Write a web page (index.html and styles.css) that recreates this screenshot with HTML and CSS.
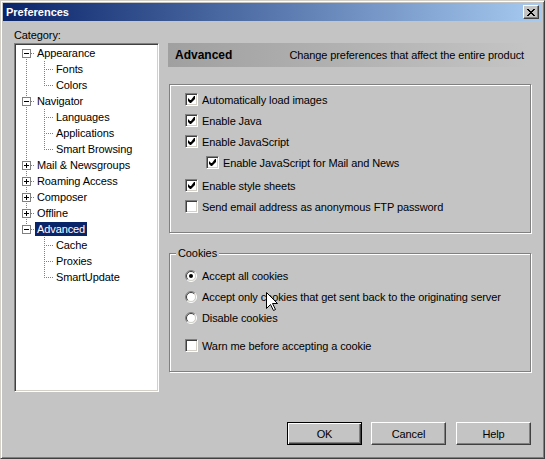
FILE: index.html
```html
<!DOCTYPE html>
<html>
<head>
<meta charset="utf-8">
<title>Preferences</title>
<link rel="stylesheet" href="styles.css">
</head>
<body>
<div class="window">
  <div class="titlebar">
    <span class="title">Preferences</span>
    <span class="close"><svg width="8" height="7" viewBox="0 0 8 7"><path fill="#000" d="M0 0h2v1H0z M6 0h2v1H6z M1 1h2v1H1z M5 1h2v1H5z M2 2h4v1H2z M3 3h2v1H3z M2 4h4v1H2z M1 5h2v1H1z M5 5h2v1H5z M0 6h2v1H0z M6 6h2v1H6z"/></svg></span>
  </div>
  <div class="content">
    <div class="cat-label">Category:</div>
    <div></div>
    <div class="tree">
      <div class="row"><span class="g r-first"><svg class="box" width="9" height="9"><rect x="0.5" y="0.5" width="8" height="8" fill="#fff" stroke="#808080"/><path d="M2 4h5v1H2z" fill="#000"/></svg></span><span class="lbl">Appearance</span></div>
      <div class="row"><span class="g pass"></span><span class="g c-mid"></span><span class="lbl">Fonts</span></div>
      <div class="row"><span class="g pass"></span><span class="g c-last"></span><span class="lbl">Colors</span></div>
      <div class="row"><span class="g r-mid"><svg class="box" width="9" height="9"><rect x="0.5" y="0.5" width="8" height="8" fill="#fff" stroke="#808080"/><path d="M2 4h5v1H2z" fill="#000"/></svg></span><span class="lbl">Navigator</span></div>
      <div class="row"><span class="g pass"></span><span class="g c-mid"></span><span class="lbl">Languages</span></div>
      <div class="row"><span class="g pass"></span><span class="g c-mid"></span><span class="lbl">Applications</span></div>
      <div class="row"><span class="g pass"></span><span class="g c-last"></span><span class="lbl">Smart Browsing</span></div>
      <div class="row"><span class="g r-mid"><svg class="box" width="9" height="9"><rect x="0.5" y="0.5" width="8" height="8" fill="#fff" stroke="#808080"/><path d="M2 4h5v1H2z M4 2h1v5H4z" fill="#000"/></svg></span><span class="lbl">Mail &amp; Newsgroups</span></div>
      <div class="row"><span class="g r-mid"><svg class="box" width="9" height="9"><rect x="0.5" y="0.5" width="8" height="8" fill="#fff" stroke="#808080"/><path d="M2 4h5v1H2z M4 2h1v5H4z" fill="#000"/></svg></span><span class="lbl">Roaming Access</span></div>
      <div class="row"><span class="g r-mid"><svg class="box" width="9" height="9"><rect x="0.5" y="0.5" width="8" height="8" fill="#fff" stroke="#808080"/><path d="M2 4h5v1H2z M4 2h1v5H4z" fill="#000"/></svg></span><span class="lbl">Composer</span></div>
      <div class="row"><span class="g r-mid"><svg class="box" width="9" height="9"><rect x="0.5" y="0.5" width="8" height="8" fill="#fff" stroke="#808080"/><path d="M2 4h5v1H2z M4 2h1v5H4z" fill="#000"/></svg></span><span class="lbl">Offline</span></div>
      <div class="row"><span class="g r-last"><svg class="box" width="9" height="9"><rect x="0.5" y="0.5" width="8" height="8" fill="#fff" stroke="#808080"/><path d="M2 4h5v1H2z" fill="#000"/></svg></span><span class="lbl sel">Advanced</span></div>
      <div class="row"><span class="g"></span><span class="g c-mid"></span><span class="lbl">Cache</span></div>
      <div class="row"><span class="g"></span><span class="g c-mid"></span><span class="lbl">Proxies</span></div>
      <div class="row"><span class="g"></span><span class="g c-last"></span><span class="lbl">SmartUpdate</span></div>
    </div>
    <div class="panel">
      <div class="header"><span class="h-title">Advanced</span><span class="h-desc">Change preferences that affect the entire product</span></div>
      <div class="group">
        <div class="opt"><span class="cb"><svg width="7" height="7" viewBox="0 0 7 7"><path fill="#000" d="M6 0h1v3L3 7H2L0 5V2l2 2h1z"/></svg></span>Automatically load images</div>
        <div class="opt"><span class="cb"><svg width="7" height="7" viewBox="0 0 7 7"><path fill="#000" d="M6 0h1v3L3 7H2L0 5V2l2 2h1z"/></svg></span>Enable Java</div>
        <div class="opt"><span class="cb"><svg width="7" height="7" viewBox="0 0 7 7"><path fill="#000" d="M6 0h1v3L3 7H2L0 5V2l2 2h1z"/></svg></span>Enable JavaScript</div>
        <div class="opt sub"><span class="cb"><svg width="7" height="7" viewBox="0 0 7 7"><path fill="#000" d="M6 0h1v3L3 7H2L0 5V2l2 2h1z"/></svg></span>Enable JavaScript for Mail and News</div>
        <div class="opt"><span class="cb"><svg width="7" height="7" viewBox="0 0 7 7"><path fill="#000" d="M6 0h1v3L3 7H2L0 5V2l2 2h1z"/></svg></span>Enable style sheets</div>
        <div class="opt"><span class="cb"></span>Send email address as anonymous FTP password</div>
      </div>
      <fieldset class="group cookies">
        <legend>Cookies</legend>
        <div class="opt"><svg class="rb" width="12" height="12" viewBox="0 0 12 12"><circle cx="6" cy="6" r="4.5" fill="#fff"/><path d="M2.1 9.9A5.5 5.5 0 0 1 9.9 2.1" fill="none" stroke="#808080"/><path d="M9.9 2.1A5.5 5.5 0 0 1 2.1 9.9" fill="none" stroke="#fff"/><path d="M2.8 9.2A4.5 4.5 0 0 1 9.2 2.8" fill="none" stroke="#404040"/><path d="M9.2 2.8A4.5 4.5 0 0 1 2.8 9.2" fill="none" stroke="#d4d0c8"/><circle cx="6" cy="6" r="2" fill="#000"/></svg>Accept all cookies</div>
        <div class="opt"><svg class="rb" width="12" height="12" viewBox="0 0 12 12"><circle cx="6" cy="6" r="4.5" fill="#fff"/><path d="M2.1 9.9A5.5 5.5 0 0 1 9.9 2.1" fill="none" stroke="#808080"/><path d="M9.9 2.1A5.5 5.5 0 0 1 2.1 9.9" fill="none" stroke="#fff"/><path d="M2.8 9.2A4.5 4.5 0 0 1 9.2 2.8" fill="none" stroke="#404040"/><path d="M9.2 2.8A4.5 4.5 0 0 1 2.8 9.2" fill="none" stroke="#d4d0c8"/></svg>Accept only cookies that get sent back to the originating server</div>
        <div class="opt"><svg class="rb" width="12" height="12" viewBox="0 0 12 12"><circle cx="6" cy="6" r="4.5" fill="#fff"/><path d="M2.1 9.9A5.5 5.5 0 0 1 9.9 2.1" fill="none" stroke="#808080"/><path d="M9.9 2.1A5.5 5.5 0 0 1 2.1 9.9" fill="none" stroke="#fff"/><path d="M2.8 9.2A4.5 4.5 0 0 1 9.2 2.8" fill="none" stroke="#404040"/><path d="M9.2 2.8A4.5 4.5 0 0 1 2.8 9.2" fill="none" stroke="#d4d0c8"/></svg>Disable cookies</div>
        <div class="opt warn"><span class="cb"></span>Warn me before accepting a cookie</div>
      </fieldset>
    </div>
    <div class="buttons">
      <span class="btn default">OK</span>
      <span class="btn">Cancel</span>
      <span class="btn">Help</span>
    </div>
  </div>
  <svg class="cursor" width="13" height="20" viewBox="0 0 13 20"><path d="M0.5 0.5V16.5L4.5 12.5L7.5 18.5L9.5 17.5L6.5 11.5H11.5Z" fill="#fff" stroke="#000"/></svg>
</div>
</body>
</html>
```
FILE: styles.css
```css
html, body {
  margin: 0;
  padding: 0;
  background: #c4c4c4;
}

.window {
  position: relative;
  box-sizing: border-box;
  width: 545px;
  height: 459px;
  background: #c4c4c4;
  border: 1px solid;
  border-color: #d4d0c8 #404040 #404040 #d4d0c8;
  box-shadow: inset 1px 1px 0 #fff, inset -1px -1px 0 #808080;
  padding: 2px 3px 2px 2px;
  font-family: "Liberation Sans", Arial, sans-serif;
  font-size: 11px;
  letter-spacing: -0.1px;
  color: #000;
}

.titlebar {
  height: 18px;
  display: flex;
  align-items: center;
  justify-content: space-between;
  background: linear-gradient(to right, #0a246a, #a6caf0);
  padding: 0 2px 0 3px;
}

.title {
  color: #fff;
  font-weight: bold;
  font-size: 11px;
  letter-spacing: 0;
}

.close {
  box-sizing: border-box;
  width: 16px;
  height: 14px;
  display: flex;
  align-items: center;
  justify-content: center;
  background: #c4c4c4;
  border: 1px solid;
  border-color: #fff #404040 #404040 #fff;
  box-shadow: inset -1px -1px 0 #808080;
}

.content {
  display: grid;
  grid-template-columns: 145px 363px;
  column-gap: 9px;
  padding: 7px 0 0 11px;
}

.cat-label {
  line-height: 15px;
  height: 15px;
}

.tree {
  box-sizing: border-box;
  height: 349px;
  background: #fff;
  border: 1px solid;
  border-color: #808080 #fff #fff #808080;
  box-shadow: inset 1px 1px 0 #404040, inset -1px -1px 0 #d4d0c8;
  padding: 1px;
}

.row {
  display: flex;
  height: 16px;
  align-items: flex-start;
}

.g {
  flex: none;
  width: 19px;
  height: 16px;
  background-repeat: no-repeat;
}

.r-first {
  background-image:
    repeating-linear-gradient(to bottom, #808080 0 1px, transparent 1px 2px),
    repeating-linear-gradient(to right, #808080 0 1px, transparent 1px 2px);
  background-position: 10px 8px, 15px 8px;
  background-size: 1px 8px, 4px 1px;
}

.r-mid {
  background-image:
    repeating-linear-gradient(to bottom, #808080 0 1px, transparent 1px 2px),
    repeating-linear-gradient(to right, #808080 0 1px, transparent 1px 2px);
  background-position: 10px 0, 15px 8px;
  background-size: 1px 16px, 4px 1px;
}

.r-last {
  background-image:
    repeating-linear-gradient(to bottom, #808080 0 1px, transparent 1px 2px),
    repeating-linear-gradient(to right, #808080 0 1px, transparent 1px 2px);
  background-position: 10px 0, 15px 8px;
  background-size: 1px 8px, 4px 1px;
}

.pass {
  background-image: repeating-linear-gradient(to bottom, #808080 0 1px, transparent 1px 2px);
  background-position: 10px 0;
  background-size: 1px 16px;
}

.c-mid {
  background-image:
    repeating-linear-gradient(to bottom, #808080 0 1px, transparent 1px 2px),
    repeating-linear-gradient(to right, #808080 0 1px, transparent 1px 2px);
  background-position: 9px 0, 9px 8px;
  background-size: 1px 16px, 9px 1px;
}

.c-last {
  background-image:
    repeating-linear-gradient(to bottom, #808080 0 1px, transparent 1px 2px),
    repeating-linear-gradient(to right, #808080 0 1px, transparent 1px 2px);
  background-position: 9px 0, 9px 8px;
  background-size: 1px 9px, 9px 1px;
}

.box {
  display: block;
  margin: 4px 0 0 6px;
}

.lbl {
  padding: 0 2px;
  height: 14px;
  line-height: 14px;
  margin-top: 1px;
  white-space: nowrap;
}

.sel {
  background: #0a246a;
  color: #fff;
}

.panel {
  display: flex;
  flex-direction: column;
}

.header {
  height: 24px;
  margin-right: 3px;
  display: flex;
  align-items: center;
  justify-content: space-between;
  padding: 0 4px 0 7px;
  background: linear-gradient(to right, #a0a0a0, #c4c4c4);
}

.h-title {
  font-weight: bold;
  font-size: 12px;
  letter-spacing: 0;
}

.group {
  margin: 17px 0 0 1px;
  border: 1px solid #808080;
  box-shadow: inset 1px 1px 0 #fff, 1px 1px 0 #fff;
  padding: 4px 0 15px 15px;
}

.opt {
  display: flex;
  align-items: center;
  gap: 4px;
  height: 21px;
  white-space: nowrap;
}

.opt.sub {
  padding-left: 21px;
  margin-bottom: 2px;
}

.cb {
  box-sizing: border-box;
  flex: none;
  width: 13px;
  height: 13px;
  display: flex;
  align-items: center;
  justify-content: center;
  background: #fff;
  border: 1px solid;
  border-color: #808080 #fff #fff #808080;
  box-shadow: inset 1px 1px 0 #404040, inset -1px -1px 0 #d4d0c8;
}

.rb {
  flex: none;
  display: block;
  margin-right: 1px;
}

.cookies {
  margin: 13px 0 0 1px;
  min-width: 0;
  padding: 5px 0 15px 15px;
}

.cookies legend {
  margin-left: -9px;
  padding: 0 2px;
  line-height: 14px;
  background: #c4c4c4;
}

.opt.warn {
  margin-top: 7px;
}

.buttons {
  grid-column: 1 / -1;
  display: flex;
  justify-content: flex-end;
  margin: 30px 0 0;
  padding-right: 0;
}

.btn {
  box-sizing: border-box;
  width: 75px;
  height: 23px;
  display: flex;
  align-items: center;
  justify-content: center;
  border: 1px solid;
  border-color: #fff #404040 #404040 #fff;
  box-shadow: inset -1px -1px 0 #808080;
  margin-left: 10px;
}

.btn.default {
  margin-left: 0;
  margin-right: -1px;
  border-color: #000;
  box-shadow: inset 1px 1px 0 #fff, inset -1px -1px 0 #404040, inset -2px -2px 0 #808080;
}

.cursor {
  position: absolute;
  left: 265px;
  top: 291px;
}
```
